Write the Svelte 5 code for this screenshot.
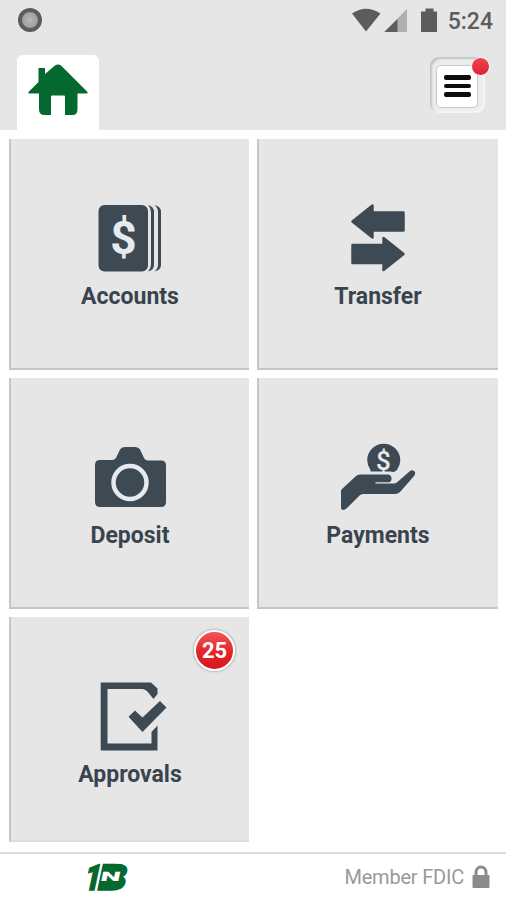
<script>

const tiles = [
    { id: 'accounts', label: 'Accounts' },
    { id: 'transfer', label: 'Transfer' },
    { id: 'deposit', label: 'Deposit' },
    { id: 'payments', label: 'Payments' },
    { id: 'approvals', label: 'Approvals', badge: 25 },
];

</script>

<div class="app">
    <header>
        <div class="status">
            <span class="record"></span>
            <svg class="signals" width="90" height="26" viewBox="0 0 90 26">
                <path d="M1 5.500 Q15 -4 29.500 5.500 L15 23.500z" />
                <path class="weak" d="M56 1V24H33z" />
                <path d="M46.500 11V24H33.500z" />
                <path d="M71 3.500h3.500v-3h8v3H86V24H70V3.500z" />
            </svg>
            <span class="time">5:24</span>
        </div>
        <div class="nav">
            <button class="home" aria-label="Home">
                <svg width="60" height="54" viewBox="0 0 60 54">
                    <path d="M10.500 5H17v6L27 2.500Q30 .500 33 2.500L59.500 29q.500 1.500-1 1.500H49.500V46q0 6-5 6H37V33.500q0-1-1-1H24q-1 0-1 1V52H16.500q-5.500 0-5.500-6V30.500H1.500q-1.500 0-1-1.500L10.500 19z" />
                </svg>
            </button>
            <button class="menu" aria-label="Menu">
                <span class="lines"><i></i><i></i><i></i></span>
                <span class="dot"></span>
            </button>
        </div>
    </header>

    <main>
        {#each tiles as tile}
            <button class="tile {tile.id}">
                <svg class="icon" width="84" height="76" viewBox="0 0 84 76">
                    {#if tile.id === 'accounts'}
                        <rect x="10.500" y="4" width="49.500" height="66.500" rx="6" />
                        <path d="M60 4q6 1.500 6 7V64q0 5-6 6.500q3-3 3-7V11q0-4-3-7z" />
                        <path d="M66.500 4q6.500 1.500 6.500 7V64q0 5-6.500 6.500q3.500-3 3.500-7V11q0-4-3.500-7z" />
                        <text class="dollar" x="35.500" y="53">$</text>
                    {:else if tile.id === 'transfer'}
                        <path class="round" d="M16.500 20.500L36.500 4.500V11.500H67.500V29.500H36.500V36.500z" />
                        <path class="round" d="M67.500 53L47.500 37V44H16.500V62H47.500V69z" />
                    {:else if tile.id === 'deposit'}
                        <path d="M12 20H24q3 0 4.500-3L32 9.500Q33.500 7 36.500 7H47.500q3 0 4.500 2.500L55.500 17q1.500 3.500 4.500 3.500H73q5 0 5 5V62q0 5-5 5H12q-5 0-5-5V25q0-5 5-5z" />
                        <circle class="lens" cx="42" cy="42.500" r="16.500" />
                    {:else if tile.id === 'payments'}
                        <path d="M34.500 30A16.500 16.500 0 1 1 61 30Q58 33 55 31.500H34.500z" />
                        <text class="coin" x="47.500" y="29.500">$</text>
                        <path d="M5 51Q5 50 6 49L19.500 36.500Q21.500 34.500 24 34.500H52Q55 34.500 55.500 38T53 42.200H39.500V43.500H58Q60 43.500 62 41.500L74 31Q76 29.500 78 31T78.500 35.500L64 52Q62 54 59 54H27Q25 54 23.500 55.500L11 68Q9 70 7 70Q5 70 5 67.500z" />
                    {:else}
                        <path d="M12.700 3.500H63L69.500 9.500V15L65.500 20L61 14.500Q58 10 54 10H19.500V64.500H63.500V53L69.500 46.500V71.500H12.700z" />
                        <path d="M40.500 37.700L47 31.500L54.500 38.500L72 22L78.500 28.500L54.500 53z" />
                    {/if}
                </svg>
                <span class="label">{tile.label}</span>
                {#if tile.badge}
                    <span class="badge">{tile.badge}</span>
                {/if}
            </button>
        {/each}
    </main>

    <footer>
        <svg class="logo" width="46" height="32" viewBox="0 0 46 32">
            <g transform="skewX(-12)">
                <text class="one" x="5" y="29" textLength="16" lengthAdjust="spacingAndGlyphs">1</text>
                <text class="bee" x="18" y="29" textLength="29" lengthAdjust="spacingAndGlyphs">B</text>
                <path class="plate" d="M20 5H39V27H20z" />
                <text class="en" x="20" y="20" textLength="20" lengthAdjust="spacingAndGlyphs">N</text>
            </g>
        </svg>
        <span class="fdic">Member FDIC</span>
        <svg class="lock" width="18" height="24" viewBox="0 0 18 24">
            <path class="shackle" d="M4 12V7.500a5 5.500 0 0 1 10 0V12" />
            <rect x=".500" y="10" width="17" height="13" rx="1" />
        </svg>
    </footer>
</div>

<style>
    :global(body) { margin: 0; background: #fff; }
    .app {
        width: 506px;
        height: 900px;
        display: flex;
        flex-direction: column;
        background: #fff;
        font-family: Roboto, sans-serif;
        overflow: hidden;
    }
    .app * { box-sizing: border-box; }
    button {
        border: none;
        padding: 0;
        margin: 0;
        font: inherit;
    }
    svg { display: block; }
    header {
        height: 130px;
        background: #e6e6e6;
    }
    .status {
        height: 55px;
        padding: 8px 13px 0 18px;
        display: flex;
        align-items: flex-start;
    }
    .record {
        width: 24px;
        height: 24px;
        border: 4px solid #5c5c5c;
        border-radius: 50%;
        background: radial-gradient(#b8b8b8, #929292);
    }
    .signals { margin-left: auto; fill: #5c5c5c; }
    .weak { fill: #b0b0b0; }
    .time {
        margin-left: 7px;
        font-size: 23px;
        line-height: 28px;
        font-weight: 500;
        color: #5c5c5c;
    }
    .nav {
        height: 75px;
        padding: 0 21px 0 17px;
        display: flex;
        justify-content: space-between;
    }
    .home {
        display: flex;
        align-items: flex-start;
        width: 82px;
        padding: 8px 0 0 11px;
        background: #fff;
        border-radius: 6px 6px 0 0;
    }
    .home svg { fill: #04682f; }
    .menu {
        position: relative;
        width: 55px;
        height: 56px;
        margin-top: 2px;
        padding: 7px 7px 5px 6px;
        border-radius: 9px;
        background: #ececec;
        box-shadow: inset 2px 2px 2px #c4c4c4, inset -2px -2px 2px #f6f6f6;
    }
    .lines {
        height: 43px;
        display: flex;
        flex-direction: column;
        align-items: center;
        justify-content: center;
        gap: 4px;
        background: #fff;
        border: 1px solid #c9c9c9;
        border-radius: 5px;
    }
    .lines i {
        width: 27px;
        height: 4.5px;
        border-radius: 2px;
        background: #0c0c0c;
    }
    .dot {
        position: absolute;
        top: 0;
        right: -5px;
        width: 19px;
        height: 19px;
        border: 1px solid #f5f5f5;
        border-radius: 50%;
        background: linear-gradient(#f04452, #e02234);
    }
    main {
        padding: 9px 8px 0 9px;
        height: 722px;
        display: grid;
        grid-template-columns: 240px 241px;
        grid-template-rows: 231px 231px 225px;
        gap: 8px;
    }
    .tile {
        position: relative;
        display: flex;
        flex-direction: column;
        align-items: center;
        padding-top: 62px;
        background: #e6e6e6;
        border-left: 2px solid #c6c6c6;
        border-bottom: 2px solid #c6c6c6;
    }
    .transfer, .payments { padding-right: 1px; }
    .approvals { border-bottom-color: #dedede; }
    .icon { fill: #3d4a53; }
    .round {
        stroke: #3d4a53;
        stroke-width: 2.5;
        stroke-linejoin: round;
    }
    .lens {
        stroke: #e6eaee;
        stroke-width: 4.5;
    }
    .dollar, .coin {
        fill: #e6eaee;
        text-anchor: middle;
        font-weight: 500;
        font-size: 46px;
    }
    .dollar { font-weight: 700; }
    .coin { font-size: 26px; }
    .label {
        margin-top: 6px;
        font-size: 23px;
        line-height: 28px;
        font-weight: 700;
        color: #3a444e;
    }
    .badge {
        position: absolute;
        top: 13px;
        right: 14px;
        width: 41px;
        height: 41px;
        border: 2px solid #fff;
        border-radius: 50%;
        background: linear-gradient(#f2565a, #e5252b 50%, #d8161d);
        box-shadow: 0 0 2px 1px #b5b5b5;
        color: #fff;
        font-size: 22px;
        line-height: 38px;
        font-weight: 700;
        text-align: center;
    }
    footer {
        height: 48px;
        padding: 0 16px 0 84px;
        display: flex;
        align-items: center;
        border-top: 2px solid #dcdcdc;
    }
    .logo {
        overflow: visible;
        font-weight: 900;
        fill: #04682f;
    }
    .logo text { font-size: 36px; }
    .bee, .one { stroke: #04682f; stroke-width: 1.5; }
    .logo .en {
        font-size: 13px;
        fill: #fff;
    }
    .fdic {
        margin-left: auto;
        font-size: 20px;
        letter-spacing: -.2px;
        color: #999;
    }
    .lock { margin-left: 8px; fill: #8c8c8c; }
    .shackle {
        fill: none;
        stroke: #8c8c8c;
        stroke-width: 3;
    }
</style>
